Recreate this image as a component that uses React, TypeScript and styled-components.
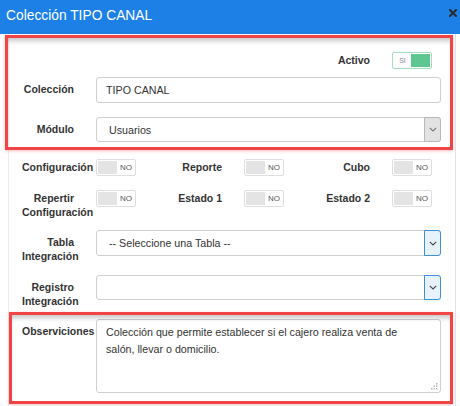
import React from 'react';
import styled, { createGlobalStyle } from 'styled-components';

const Global = createGlobalStyle`
  html, body { margin: 0; padding: 0; background: #fff; }
  body { font-family: "Liberation Sans", Arial, sans-serif; color: #333; }
  * { box-sizing: border-box; }
`;

const Modal = styled.div`
  position: relative;
  width: 460px;
  height: 406px;
  overflow: hidden;
  background: #fff;
  display: flex;
  flex-direction: column;
`;

const Header = styled.div`
  flex: none;
  height: 34px;
  background: #1c80e6;
  display: flex;
  align-items: flex-start;
  justify-content: space-between;
  padding: 8px 3px 0 6px;
`;

const Title = styled.h1`
  margin: 0;
  font-size: 13.8px;
  line-height: 16px;
  font-weight: normal;
  color: #fff;
`;

const CloseButton = styled.button`
  border: 0;
  background: transparent;
  padding: 0;
  margin-top: 1px;
  width: 8px;
  height: 8px;
  display: flex;
  cursor: pointer;
`;

const Body = styled.div`
  flex: 1;
  margin: 0 4px 0 8px;
  border-left: 1px solid #ececec;
  border-right: 1px solid #e2e2e2;
  padding: 0 14px 0 13px;
  display: flex;
  flex-direction: column;
`;

const FieldRow = styled.div<{ $mt: number }>`
  display: flex;
  align-items: flex-start;
  margin-top: ${(p) => p.$mt}px;
`;

const ToggleGrid = styled.div<{ $mt: number }>`
  display: grid;
  grid-template-columns: repeat(3, 148px);
  margin-top: ${(p) => p.$mt}px;
`;

const Group = styled.div<{ $col?: number }>`
  display: flex;
  align-items: flex-start;
  grid-column: ${(p) => p.$col ?? 'auto'};
`;

const Label = styled.label<{ $pt?: number }>`
  flex: none;
  width: 52px;
  margin-right: 22px;
  padding-top: ${(p) => p.$pt ?? 5}px;
  text-align: right;
  font-weight: bold;
  font-size: 10.5px;
  line-height: 14px;
  color: #333;
`;

const Switch = styled.div<{ $on: boolean }>`
  flex: none;
  width: 40px;
  height: 17px;
  padding: 1px;
  border: 1px solid ${(p) => (p.$on ? '#a3dec0' : '#dedede')};
  border-radius: 2px;
  background: #fff;
  display: flex;
  align-items: stretch;
`;

const Knob = styled.span<{ $on: boolean }>`
  width: 19px;
  background: ${(p) => (p.$on ? '#5ec690' : '#e4e4e4')};
`;

const SwitchText = styled.span<{ $on: boolean }>`
  flex: 1;
  display: flex;
  align-items: center;
  justify-content: center;
  font-size: ${(p) => (p.$on ? '7px' : '8px')};
  color: ${(p) => (p.$on ? '#8a8a8a' : '#555')};
  padding-left: ${(p) => (p.$on ? '0' : '1px')};
`;

const TextInput = styled.input`
  flex: 1;
  min-width: 0;
  height: 26px;
  border: 1px solid #cfcfcf;
  border-radius: 3px;
  padding: 0 9px;
  font-family: inherit;
  font-size: 10.7px;
  color: #333;
  outline: none;
  background: #fff;
`;

const Select = styled.div<{ $h: number }>`
  flex: 1;
  height: ${(p) => p.$h}px;
  border: 1px solid #cfcfcf;
  border-radius: 3px;
  display: flex;
  align-items: center;
  background: #fff;
`;

const SelectValue = styled.span`
  flex: 1;
  padding-left: 12px;
  font-size: 10.7px;
  color: #333;
  white-space: nowrap;
`;

const Arrow = styled.span<{ $focus: boolean }>`
  flex: none;
  align-self: stretch;
  width: 17px;
  margin: -1px;
  border: 1px solid ${(p) => (p.$focus ? '#3f8edb' : '#b9b9b9')};
  border-radius: 0 3px 3px 0;
  background: ${(p) => (p.$focus ? '#e8f2fd' : '#e2e2e2')};
  display: flex;
  align-items: center;
  justify-content: center;
`;

const AreaWrap = styled.div`
  flex: 1;
  position: relative;
  display: flex;
`;

const TextArea = styled.textarea`
  flex: 1;
  height: 74px;
  border: 1px solid #cfcfcf;
  border-radius: 3px;
  padding: 4px 20px 4px 9px;
  font-family: inherit;
  font-size: 10.7px;
  line-height: 16.6px;
  color: #333;
  resize: none;
  outline: none;
  overflow: hidden;
`;

const Grip = styled.svg`
  position: absolute;
  right: 3px;
  bottom: 3px;
`;

const Highlight = styled.div<{ $x: number; $y: number; $w: number; $h: number }>`
  position: absolute;
  left: ${(p) => p.$x}px;
  top: ${(p) => p.$y}px;
  width: ${(p) => p.$w}px;
  height: ${(p) => p.$h}px;
  border: 3px solid #ef4547;
  box-shadow: inset 0 5px 5px -2px rgba(0, 0, 0, 0.22), 0 1px 3px rgba(239, 69, 71, 0.35);
  pointer-events: none;
`;

function Toggle({ on }: { on: boolean }) {
  return (
    <Switch $on={on}>
      {on ? (
        <>
          <SwitchText $on>SI</SwitchText>
          <Knob $on />
        </>
      ) : (
        <>
          <Knob $on={false} />
          <SwitchText $on={false}>NO</SwitchText>
        </>
      )}
    </Switch>
  );
}

function Chevron({ color }: { color: string }) {
  return (
    <svg width="8" height="5" viewBox="0 0 8 5">
      <path d="M0.8 0.8 L4 4 L7.2 0.8" fill="none" stroke={color} strokeWidth="1.1" />
    </svg>
  );
}

function FakeSelect({ value, focus, h = 26 }: { value: string; focus: boolean; h?: number }) {
  return (
    <Select $h={h}>
      <SelectValue>{value}</SelectValue>
      <Arrow $focus={focus}>
        <Chevron color={focus ? '#444' : '#777'} />
      </Arrow>
    </Select>
  );
}

export default function App() {
  return (
    <>
      <Global />
      <Modal>
        <Header>
          <Title>Colección TIPO CANAL</Title>
          <CloseButton aria-label="Cerrar">
            <svg width="8" height="8" viewBox="0 0 8 8">
              <path d="M1 1 L7 7 M7 1 L1 7" stroke="#2b2b2b" strokeWidth="2" strokeLinecap="square" />
            </svg>
          </CloseButton>
        </Header>
        <Body>
          <ToggleGrid $mt={18}>
            <Group $col={3}>
              <Label $pt={1}>Activo</Label>
              <Toggle on />
            </Group>
          </ToggleGrid>

          <FieldRow $mt={8}>
            <Label>Colección</Label>
            <TextInput readOnly value="TIPO CANAL" />
          </FieldRow>

          <FieldRow $mt={14}>
            <Label>Módulo</Label>
            <FakeSelect value="Usuarios" focus={false} h={25} />
          </FieldRow>

          <ToggleGrid $mt={17}>
            <Group>
              <Label $pt={1}>Configuración</Label>
              <Toggle on={false} />
            </Group>
            <Group>
              <Label $pt={1}>Reporte</Label>
              <Toggle on={false} />
            </Group>
            <Group>
              <Label $pt={1}>Cubo</Label>
              <Toggle on={false} />
            </Group>
          </ToggleGrid>

          <ToggleGrid $mt={14}>
            <Group>
              <Label $pt={1}>Repertir Configuración</Label>
              <Toggle on={false} />
            </Group>
            <Group>
              <Label $pt={1}>Estado 1</Label>
              <Toggle on={false} />
            </Group>
            <Group>
              <Label $pt={1}>Estado 2</Label>
              <Toggle on={false} />
            </Group>
          </ToggleGrid>

          <FieldRow $mt={11}>
            <Label>Tabla Integración</Label>
            <FakeSelect value="-- Seleccione una Tabla --" focus />
          </FieldRow>

          <FieldRow $mt={12}>
            <Label>Registro Integración</Label>
            <FakeSelect value="" focus h={25} />
          </FieldRow>

          <FieldRow $mt={11}>
            <Label>Observiciones</Label>
            <AreaWrap>
              <TextArea
                readOnly
                value="Colección que permite establecer si el cajero realiza venta de salón, llevar o domicilio."
              />
              <Grip width="7" height="7" viewBox="0 0 7 7">
                <g fill="#b8b8b8">
                  <rect x="5" y="0" width="1.5" height="1.5" />
                  <rect x="2.5" y="2.5" width="1.5" height="1.5" />
                  <rect x="5" y="2.5" width="1.5" height="1.5" />
                  <rect x="0" y="5" width="1.5" height="1.5" />
                  <rect x="2.5" y="5" width="1.5" height="1.5" />
                  <rect x="5" y="5" width="1.5" height="1.5" />
                </g>
              </Grip>
            </AreaWrap>
          </FieldRow>
        </Body>
        <Highlight $x={5} $y={35} $w={448} $h={115} />
        <Highlight $x={9} $y={312} $w={444} $h={92} />
      </Modal>
    </>
  );
}
